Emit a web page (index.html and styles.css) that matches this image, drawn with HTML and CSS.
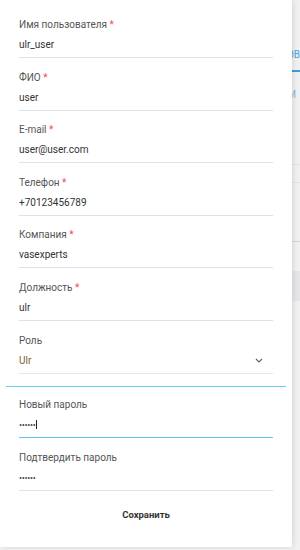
FILE: index.html
```html
<!DOCTYPE html>
<html lang="ru">

<head>
    <meta charset="utf-8">
    <meta name="viewport" content="width=device-width, initial-scale=1.0">
    <title>Профиль</title>
    <link rel="stylesheet" href="styles.css">
</head>

<body>
    <!-- страница под панелью -->
    <div class="page">
        <div class="page-tabs"><span class="page-tab">История сеансов</span></div>
        <div class="page-sub">По ролям</div>
        <div class="page-line page-line-1"></div>
        <div class="page-line page-line-2"></div>
        <div class="page-line page-line-3"></div>
        <div class="page-band"></div>
    </div>

    <aside class="drawer">
        <form class="form">
            <div class="field">
                <label class="field-label">Имя пользователя <span class="req">*</span></label>
                <div class="field-value">ulr_user</div>
            </div>
            <div class="field">
                <label class="field-label">ФИО <span class="req">*</span></label>
                <div class="field-value">user</div>
            </div>
            <div class="field">
                <label class="field-label">E-mail <span class="req">*</span></label>
                <div class="field-value">user@user.com</div>
            </div>
            <div class="field">
                <label class="field-label">Телефон <span class="req">*</span></label>
                <div class="field-value">+70123456789</div>
            </div>
            <div class="field">
                <label class="field-label">Компания <span class="req">*</span></label>
                <div class="field-value">vasexperts</div>
            </div>
            <div class="field">
                <label class="field-label">Должность <span class="req">*</span></label>
                <div class="field-value">ulr</div>
            </div>
            <div class="field field-last">
                <label class="field-label">Роль</label>
                <div class="field-value field-select">
                    <span class="select-text">Ulr</span>
                    <svg class="chevron" width="8" height="5" viewBox="0 0 8 5">
                        <path d="M1 1 L4 4 L7 1" fill="none" stroke="#666" stroke-width="1.2"/>
                    </svg>
                </div>
            </div>
        </form>

        <hr class="divider">

        <form class="form form-pass">
            <div class="field">
                <label class="field-label">Новый пароль</label>
                <div class="field-value field-focus"><span class="dots">••••••</span><span class="caret"></span></div>
            </div>
            <div class="field field-last">
                <label class="field-label">Подтвердить пароль</label>
                <div class="field-value"><span class="dots">••••••</span></div>
            </div>
        </form>

        <div class="actions">
            <button class="save" type="button">Сохранить</button>
        </div>
    </aside>
</body>

</html>
```

FILE: styles.css
```css
body {
    margin: 0;
    font-family: Roboto, "Liberation Sans", sans-serif;
    background-color: #f0f0f0;
    overflow: hidden;
}

/* страница на заднем плане */
.page {
    width: 300px;
    height: 550px;
    background-color: #f1f1f1;
}

.page-tabs {
    display: flex;
    justify-content: flex-end;
    margin-left: 200px;
    padding-top: 48px;
    height: 22px;
    border-bottom: 2px solid #3d9ee0;
}

.page-tab {
    font-size: 10px;
    line-height: 14px;
    text-transform: uppercase;
    color: #4aa3e2;
    white-space: nowrap;
}

.page-sub {
    margin-top: 16px;
    padding-right: 4px;
    text-align: right;
    font-size: 10px;
    line-height: 14px;
    text-transform: uppercase;
    color: #7fbce8;
}

.page-line {
    height: 1px;
    background-color: #e3e3e3;
}

.page-line-1 {
    margin-top: 62px;
}

.page-line-2 {
    margin-top: 17px;
}

.page-line-3 {
    margin-top: 58px;
    background-color: #d6d6d6;
}

.page-band {
    margin-top: 29px;
    height: 30px;
    background-color: #e6e6ea;
}

/* панель редактирования */
.drawer {
    position: absolute;
    top: 0;
    left: 0;
    width: 292px;
    height: 547px;
    background-color: #ffffff;
    box-shadow: 1px 0 6px rgba(0, 0, 0, 0.12);
}

.form {
    padding: 18px 19px 0 19px;
}

.form-pass {
    padding-top: 11px;
}

.field {
    margin-bottom: 12.6px;
}

.field-last {
    margin-bottom: 0;
}

.field-label {
    display: block;
    font-size: 10px;
    line-height: 14px;
    color: #555555;
}

.req {
    color: #f24b4b;
}

.field-value {
    padding: 6px 0 5px 0;
    font-size: 10px;
    line-height: 14px;
    color: #333333;
    border-bottom: 1px solid #dde3ed;
}

.field-select {
    display: flex;
    align-items: center;
    justify-content: space-between;
    border-bottom-color: #e6e8ec;
}

.select-text {
    color: #7d5f2e;
}

.chevron {
    margin-right: 10px;
}

.field-focus {
    display: flex;
    align-items: center;
    border-bottom-color: #5ec4f2;
}

.dots {
    font-size: 9px;
    letter-spacing: -0.3px;
    color: #444444;
}

.caret {
    width: 1px;
    height: 9px;
    margin-left: 1px;
    background-color: #222222;
}

.divider {
    margin: 12.4px 6px 0 6px;
    border: 0;
    height: 1px;
    background-color: #6ccdf5;
}

.actions {
    display: flex;
    justify-content: center;
    padding-top: 17px;
}

.save {
    padding: 0;
    border: 0;
    background: none;
    font-family: Roboto, "Liberation Sans", sans-serif;
    font-size: 9.5px;
    line-height: 14px;
    font-weight: bold;
    color: #333333;
}
```
